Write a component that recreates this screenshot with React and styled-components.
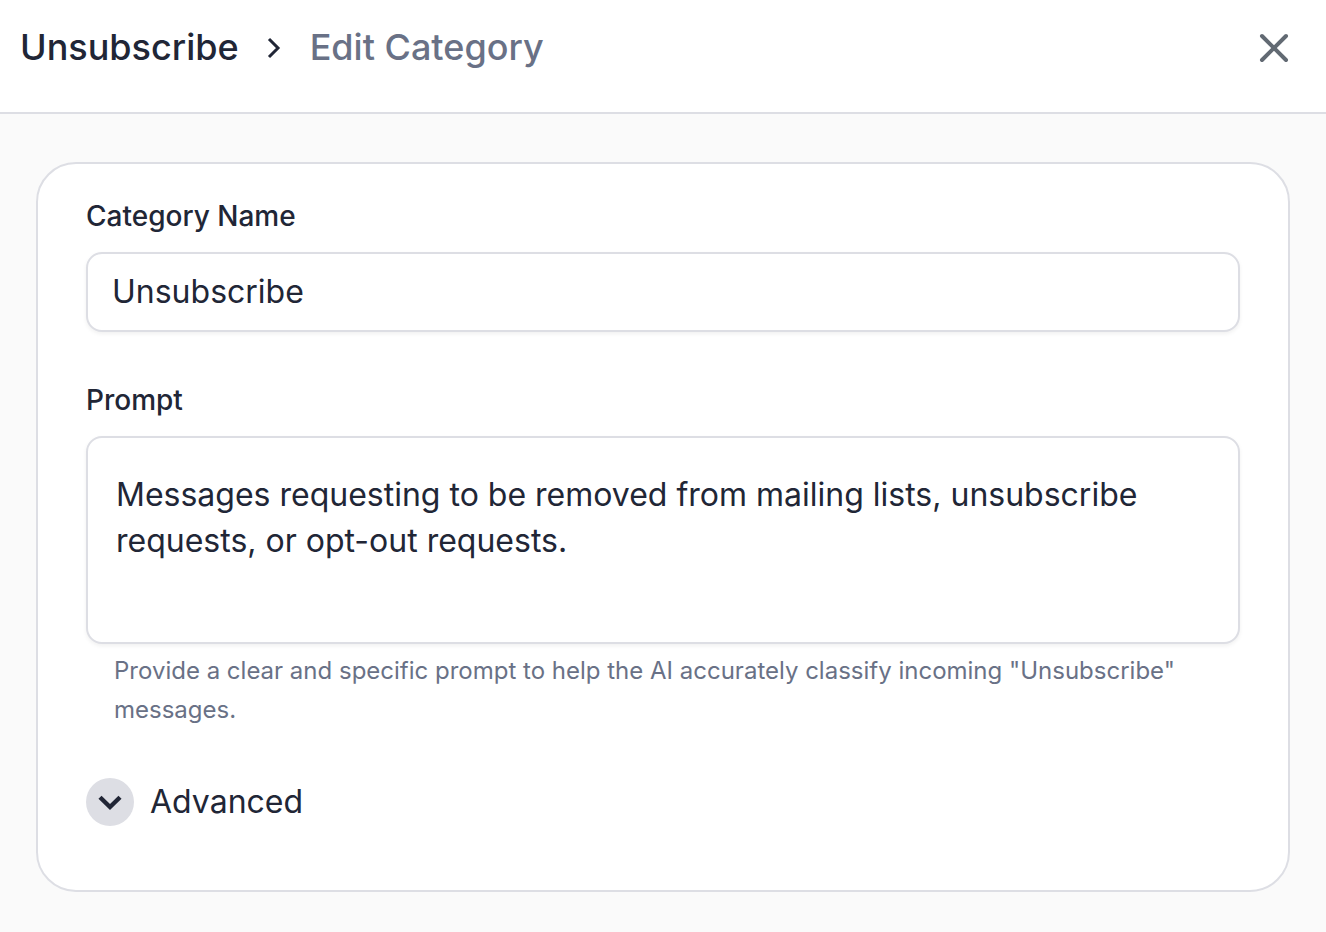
import React, { useState } from 'react'
import styled, { createGlobalStyle } from 'styled-components'

export default function App () {
  const [name, setName] = useState('Unsubscribe')
  const [prompt, setPrompt] = useState(
    'Messages requesting to be removed from mailing lists, unsubscribe requests, or opt-out requests.'
  )

  return (
    <>
      <GlobalStyle />
      <Header>
        <Breadcrumbs aria-label='Breadcrumb'>
          <Crumb href='#category'>Unsubscribe</Crumb>
          <Separator viewBox='0 0 15 22' aria-hidden='true'>
            <path d='M2 2l9 9-9 9' />
          </Separator>
          <Current>Edit Category</Current>
        </Breadcrumbs>
        <CloseButton type='button' aria-label='Close'>
          <CloseIcon viewBox='0 0 32 32' aria-hidden='true'>
            <path d='M4 4l24 24M28 4L4 28' />
          </CloseIcon>
        </CloseButton>
      </Header>
      <Main>
        <Card>
          <Field>
            <Label htmlFor='name'>Category Name</Label>
            <Input id='name' value={name} onChange={e => setName(e.target.value)} />
          </Field>
          <Field>
            <Label htmlFor='prompt'>Prompt</Label>
            <TextArea id='prompt' value={prompt} onChange={e => setPrompt(e.target.value)} />
            <Hint>
              Provide a clear and specific prompt to help the AI accurately classify incoming "Unsubscribe" messages.
            </Hint>
          </Field>
          <Advanced type='button'>
            <Circle>
              <Chevron viewBox='0 0 24 24' aria-hidden='true'>
                <path d='M2 7.2l10 9.8 10-9.8' />
              </Chevron>
            </Circle>
            Advanced
          </Advanced>
        </Card>
      </Main>
    </>
  )
}

const GlobalStyle = createGlobalStyle`
  * {
    box-sizing: border-box;
  }
  body {
    margin: 0;
    background: #fafafa;
    color: #212636;
    font-family: Inter, sans-serif;
  }
  button, input, textarea {
    font: inherit;
    color: inherit;
  }
`

const Header = styled.header`
  display: flex;
  align-items: center;
  justify-content: space-between;
  padding: 24px 36px 40px 20px;
  background: #fff;
  border-bottom: 2px solid #dddee4;
`

const Breadcrumbs = styled.nav`
  display: flex;
  align-items: center;
  padding-bottom: 2px;
  font-size: 36px;
  line-height: 46px;
  font-weight: 500;
`

const Crumb = styled.a`
  color: inherit;
  text-decoration: none;
`

const Separator = styled.svg`
  width: 15px;
  height: 22px;
  margin: 2px 28px 0;
  fill: none;
  stroke: #212636;
  stroke-width: 3;
`

const Current = styled.span`
  color: #697186;
`

const CloseButton = styled.button`
  display: flex;
  padding: 0;
  border: 0;
  background: none;
  cursor: pointer;
`

const CloseIcon = styled.svg`
  width: 32px;
  height: 32px;
  fill: none;
  stroke: #626a73;
  stroke-width: 4;
  stroke-linecap: round;
`

const Main = styled.main`
  padding: 48px 36px 40px;
`

const Card = styled.section`
  display: flex;
  flex-direction: column;
  gap: 48px;
  padding: 32px 48px 64px;
  background: #fff;
  border: 2px solid #dddee4;
  border-radius: 40px;
`

const Field = styled.div`
  display: flex;
  flex-direction: column;
`

const Label = styled.label`
  margin-bottom: 16px;
  font-size: 28px;
  line-height: 40px;
  font-weight: 500;
`

const Input = styled.input`
  width: 100%;
  height: 80px;
  padding: 0 24px 2px;
  border: 2px solid #dddee4;
  border-radius: 16px;
  box-shadow: 0 2px 4px rgba(0, 0, 0, 0.06);
  background: #fff;
  font-size: 32px;
`

const TextArea = styled.textarea`
  width: 100%;
  height: 208px;
  padding: 34px 28px;
  border: 2px solid #dddee4;
  border-radius: 16px;
  box-shadow: 0 2px 4px rgba(0, 0, 0, 0.06);
  background: #fff;
  font-size: 32px;
  line-height: 46px;
  resize: none;
`

const Hint = styled.p`
  margin: 7px 28px 1px;
  color: #697186;
  font-size: 24px;
  line-height: 39px;
`

const Advanced = styled.button`
  display: flex;
  align-items: center;
  align-self: flex-start;
  gap: 16px;
  padding: 0;
  border: 0;
  background: none;
  font-size: 32px;
  line-height: 48px;
  cursor: pointer;
`

const Circle = styled.span`
  display: flex;
  align-items: center;
  justify-content: center;
  width: 48px;
  height: 48px;
  border-radius: 50%;
  background: #dddee4;
`

const Chevron = styled.svg`
  width: 24px;
  height: 24px;
  fill: none;
  stroke: #212636;
  stroke-width: 4.4;
`
